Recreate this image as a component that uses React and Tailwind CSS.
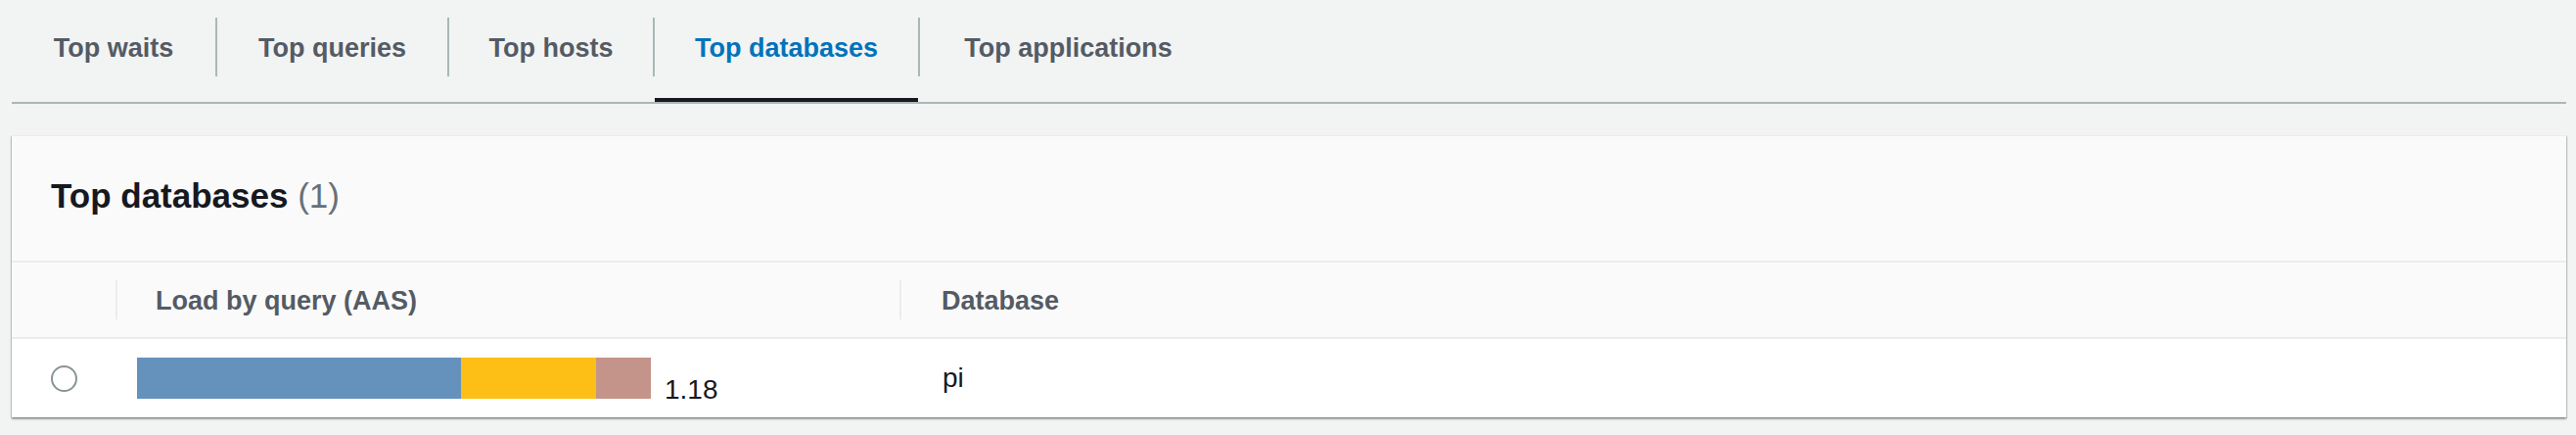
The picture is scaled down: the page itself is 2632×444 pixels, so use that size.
import { useState } from 'react';

const font = "font-['Liberation_Sans',Arial,sans-serif]";

const tabs = [
  { label: 'Top waits', width: 'w-[208px]' },
  { label: 'Top queries', width: 'w-[235px]' },
  { label: 'Top hosts', width: 'w-[208px]' },
  { label: 'Top databases', width: 'w-[269px]' },
  { label: 'Top applications', width: 'w-[303px]' },
];

const segments = [
  { color: 'bg-[#6592bd]', width: 'w-[331px]' },
  { color: 'bg-[#fdbf16]', width: 'w-[138px]' },
  { color: 'bg-[#c4948a]', width: 'w-[56px]' },
];

const Tab = ({ label, width, active, showDivider, onClick }) => (
  <li className="flex h-[104px] items-start">
    {showDivider && <span className="mt-[18px] h-[60px] w-[2px] bg-[#aab7b8]" aria-hidden />}
    <button
      type="button"
      onClick={onClick}
      className={`relative flex h-[104px] ${width} items-start justify-center pt-[18px]`}
    >
      <span
        className={`flex h-[60px] items-center pt-[3px] text-[27px] font-bold ${
          active ? 'text-[#0073bb]' : 'text-[#545b64]'
        }`}
      >
        {label}
      </span>
      {active && <span className="absolute inset-x-0 bottom-0 h-[4px] bg-[#16191f]" aria-hidden />}
    </button>
  </li>
);

const HeaderCell = ({ className, children, divider = true }) => (
  <div className={`flex h-full items-center ${className}`}>
    {divider && <span className="h-[40px] w-[2px] bg-[#eaeded]" aria-hidden />}
    {children}
  </div>
);

export default function App() {
  const [active, setActive] = useState(3);
  const [selected, setSelected] = useState(false);

  return (
    <div className={`h-[444px] w-[2632px] bg-[#f2f3f3] pl-[12px] pr-[10px] ${font}`}>
      <ul className="flex border-b-2 border-[#aab7b8]">
        {tabs.map((tab, index) => (
          <Tab
            key={tab.label}
            {...tab}
            active={index === active}
            showDivider={index !== 0}
            onClick={() => setActive(index)}
          />
        ))}
      </ul>

      <section className="mt-[32px] border-t border-[#eaeded] bg-[#fafafa] shadow-[0_2px_2px_0_rgba(0,28,36,0.3),1px_1px_1px_0_rgba(0,28,36,0.15),-1px_1px_1px_0_rgba(0,28,36,0.15)]">
        <div className="flex h-[129px] items-center border-b-2 border-[#eaeded] px-[40px] pb-[4px]">
          <h2 className="text-[35px] font-bold text-[#16191f]">
            Top databases <span className="font-normal text-[#687078]">(1)</span>
          </h2>
        </div>

        <div className="flex h-[78px] border-b-2 border-[#eaeded] text-[27px] font-bold text-[#545b64]">
          <HeaderCell className="w-[106px]" divider={false} />
          <HeaderCell className="w-[801px]">
            <span className="pl-[39px] pt-[2px]">Load by query (AAS)</span>
          </HeaderCell>
          <HeaderCell className="flex-1">
            <span className="pl-[41px] pt-[2px]">Database</span>
          </HeaderCell>
        </div>

        <div className="flex h-[80px] bg-white text-[28px] text-[#16191f]">
          <div className="flex w-[106px] items-center justify-center">
            <button
              type="button"
              onClick={() => setSelected((prev) => !prev)}
              className="flex h-[27px] w-[27px] items-center justify-center rounded-full border-[2.5px] border-[#879596]"
              aria-label="Select row"
            >
              {selected && <span className="h-[11px] w-[11px] rounded-full bg-[#0073bb]" />}
            </button>
          </div>
          <div className="flex w-[803px] items-center pl-[22px]">
            <div className="mt-[4px] leading-[28px]">
              {segments.map((seg) => (
                <span key={seg.color} className={`inline-block h-[42px] align-baseline ${seg.width} ${seg.color}`} />
              ))}
              <span className="pl-[14px]">1.18</span>
            </div>
          </div>
          <div className="flex flex-1 items-center pl-[42px]">
            <span>pi</span>
          </div>
        </div>
      </section>
    </div>
  );
}
